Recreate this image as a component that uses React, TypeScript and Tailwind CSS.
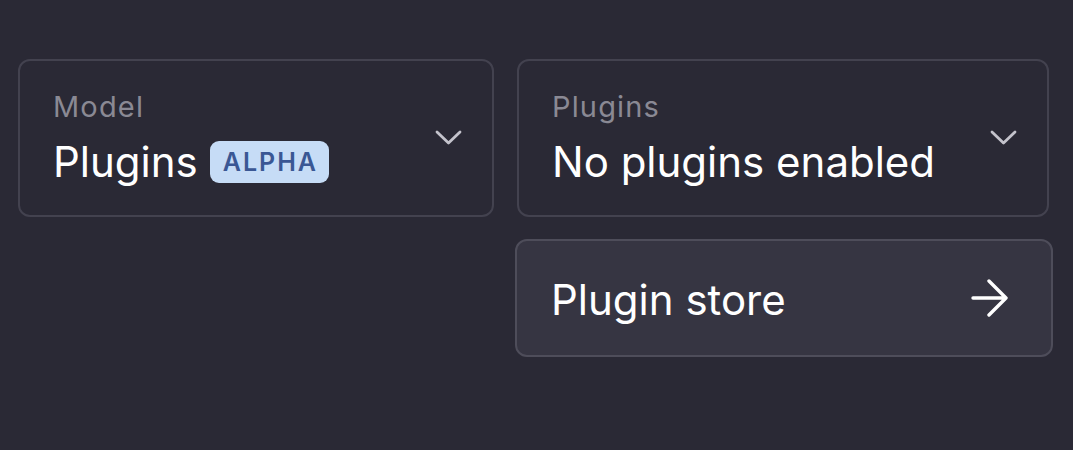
import React from 'react'

const font = { fontFamily: 'Inter, "Noto Sans", sans-serif' }

function Chevron() {
    return (
        <svg width="27" height="16" viewBox="0 0 27 16" fill="none" className="shrink-0 text-[#c4c3cc]">
            <polyline points="2,2 13.5,13 25,2" stroke="currentColor" strokeWidth="2.8" strokeLinecap="round" strokeLinejoin="round" />
        </svg>
    )
}

function Arrow() {
    return (
        <svg width="38" height="38" viewBox="0 0 38 38" fill="none" className="shrink-0 text-white">
            <path d="M2 19h33M18 2l17 17-17 17" stroke="currentColor" strokeWidth="3.4" strokeLinecap="round" strokeLinejoin="round" />
        </svg>
    )
}

function SelectCard({ label, children, className }: { label: string; children: React.ReactNode; className?: string }) {
    return (
        <div className={`flex h-[158px] items-center justify-between rounded-[12px] border-2 border-[#43424f] pl-[33px] pr-[30px] ${className ?? ''}`}>
            <div className="flex h-full flex-col pt-[28px]">
                <span className="text-[29px] leading-[36px] tracking-[0.04em] text-[#8a8994]">{label}</span>
                <div className="mt-[14px] flex items-center gap-[12px] text-[42px] leading-[46px] text-white">{children}</div>
            </div>
            <Chevron />
        </div>
    )
}

export default function App() {
    return (
        <div className="h-[450px] w-[1073px] bg-[#2a2935] pl-[18px] pt-[59px]" style={font}>
            <div className="flex gap-[21px]">
                <SelectCard label="Model" className="w-[476px]">
                    <span>Plugins</span>
                    <span className="rounded-[9px] bg-[#c6dcf6] pl-[13px] pr-[11px] py-[3px] text-[25px] font-semibold leading-[36px] tracking-[0.08em] text-[#3a5794]">
                        ALPHA
                    </span>
                </SelectCard>

                <div className="flex w-[538px] flex-col gap-[22px]">
                    <SelectCard label="Plugins" className="ml-[2px] mr-[4px]">
                        <span>No plugins enabled</span>
                    </SelectCard>

                    <button className="flex h-[118px] items-center justify-between rounded-[12px] border-2 border-[#4e4d5a] bg-[#363542] pl-[34px] pr-[42px] text-left">
                        <span className="pt-[3px] text-[42px] leading-[46px] text-white">Plugin store</span>
                        <Arrow />
                    </button>
                </div>
            </div>
        </div>
    )
}
